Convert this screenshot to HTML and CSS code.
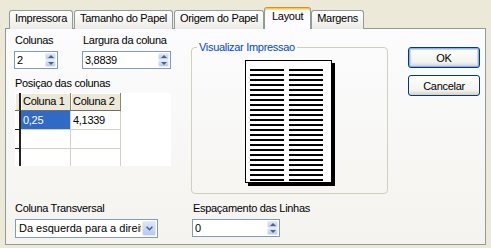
FILE: index.html
```html
<!DOCTYPE html>
<html lang="pt">
<head>
  <meta charset="UTF-8" />
  <title>Layout</title>
  <link rel="stylesheet" href="styles.css">
</head>
<body>
  <div class="dialog">
    <div class="tabs">
      <div class="tab">Impressora</div>
      <div class="tab">Tamanho do Papel</div>
      <div class="tab">Origem do Papel</div>
      <div class="tab active">Layout</div>
      <div class="tab">Margens</div>
    </div>

    <div class="panel">
      <div class="left">
        <div class="fields">
          <div class="field">
            <div class="label">Colunas</div>
            <div class="spin cols">
              <span class="value">2</span>
              <span class="spin-btns"><span class="up"></span><span class="down"></span></span>
            </div>
          </div>
          <div class="field">
            <div class="label">Largura da coluna</div>
            <div class="spin width">
              <span class="value">3,8839</span>
              <span class="spin-btns"><span class="up"></span><span class="down"></span></span>
            </div>
          </div>
        </div>
        <div class="label section-label">Posiçao das colunas</div>
        <div class="grid">
          <table>
            <tr><th class="ind"></th><th>Coluna 1</th><th>Coluna 2</th></tr>
            <tr><td class="ind"></td><td class="sel">0,25</td><td>4,1339</td></tr>
            <tr><td class="ind"></td><td></td><td></td></tr>
            <tr><td class="ind"></td><td></td><td></td></tr>
          </table>
        </div>
      </div>

      <fieldset class="preview">
        <legend>Visualizar Impressao</legend>
        <div class="page">
          <div class="page-col"></div>
          <div class="page-col"></div>
        </div>
      </fieldset>

      <div class="buttons">
        <button class="btn default">OK</button>
        <button class="btn">Cancelar</button>
      </div>

      <div class="bottom">
        <div class="label">Coluna Transversal</div>
        <div class="combo">
          <span class="value">Da esquerda para a direita</span>
          <span class="combo-btn">
            <svg width="7" height="5" viewBox="0 0 7 5"><path d="M0.6 0.8 L3.5 3.7 L6.4 0.8" fill="none" stroke="#4D6185" stroke-width="1.6"/></svg>
          </span>
        </div>
      </div>

      <div class="bottom second">
        <div class="label">Espaçamento das Linhas</div>
        <div class="spin spacing">
          <span class="value">0</span>
          <span class="spin-btns"><span class="up"></span><span class="down"></span></span>
        </div>
      </div>
    </div>
  </div>
</body>
</html>
```

FILE: styles.css
```css
* {
  box-sizing: border-box;
}
body {
  margin: 0;
  background: #ECE9D8;
  font-family: "Liberation Sans", Arial, sans-serif;
  font-size: 11px;
  letter-spacing: -0.3px;
  color: #000;
}
.dialog {
  padding: 7px 0 0 5px;
}

/* tabs */
.tabs {
  display: flex;
  align-items: flex-end;
  height: 22px;
  padding-left: 4px;
  margin-bottom: -1px;
}
.tab {
  height: 19px;
  padding: 1px 5px 0;
  line-height: 13px;
  white-space: nowrap;
  border: 1px solid #919B9C;
  border-bottom: 0;
  border-radius: 3px 3px 0 0;
  background: linear-gradient(#FFFFFF, #ECEBE6);
  margin-right: 1px;
}
.tab.active {
  position: relative;
  z-index: 1;
  height: 22px;
  padding: 2px 7px 0;
  margin-left: -1px;
  margin-right: 0;
  background: #FCFCFE;
  border-top-color: #E68B2C;
  box-shadow: inset 0 1px 0 #FFC83C, inset 0 2px 0 #FFE2A0;
}

/* panel */
.panel {
  width: 481px;
  height: 217px;
  border: 1px solid #919B9C;
  background: linear-gradient(#FCFCFE, #F4F3EE);
  padding: 5px 4px 0 8px;
  display: grid;
  grid-template-columns: 157px 197px 72px;
  grid-template-rows: 160px auto;
  column-gap: 20px;
  row-gap: 8px;
}
.label {
  line-height: 13px;
  padding-left: 1px;
  white-space: nowrap;
}
.fields {
  display: flex;
  gap: 24px;
}
.field .label,
.bottom .label {
  margin-bottom: 4px;
}

/* spin edit */
.spin {
  display: flex;
  height: 18px;
  border: 1px solid #7F9DB9;
  background: #fff;
}
.spin .value {
  flex: 1;
  padding-left: 2px;
  line-height: 16px;
}
.spin-btns {
  display: flex;
  flex-direction: column;
  width: 11px;
  margin: 1px;
}
.spin-btns span {
  flex: 1;
  display: flex;
  align-items: center;
  justify-content: center;
  background: linear-gradient(#DCE5FC, #B6C9F5);
  border: 1px solid #E4EBFD;
  border-radius: 2px;
}
.spin-btns .up::after {
  content: "";
  border: 3px solid transparent;
  border-top: 0;
  border-bottom-color: #4D6185;
}
.spin-btns .down::after {
  content: "";
  border: 3px solid transparent;
  border-bottom: 0;
  border-top-color: #4D6185;
}
.cols { width: 44px; }
.width { width: 89px; }
.spacing { width: 88px; }

/* grid */
.section-label {
  margin-top: 8px;
  margin-bottom: 3px;
}
.grid {
  margin-left: 1px;
  width: 156px;
  height: 73px;
  background: #fff;
  overflow: hidden;
}
.grid table {
  border-collapse: separate;
  border-spacing: 0;
  table-layout: fixed;
  width: 106px;
}
.grid th,
.grid td {
  padding: 0 0 0 2px;
  text-align: left;
  font-weight: normal;
  white-space: nowrap;
  overflow: hidden;
}
.grid th {
  width: 50px;
  height: 18px;
  line-height: 17px;
  background: #ECE9D8;
  border-right: 1px solid #8A8775;
  border-bottom: 1px solid #716F64;
  box-shadow: inset 1px 1px 0 #fff;
}
.grid td {
  height: 19px;
  line-height: 18px;
  border-right: 1px solid #D4D0C8;
  border-bottom: 1px solid #D4D0C8;
}
.grid .ind {
  width: 6px;
  padding: 0;
  border-right: 2px solid #222;
}
.grid td.ind {
  border-bottom-color: #222;
}
.grid .sel {
  background: #316AC5;
  color: #fff;
}

/* preview */
.preview {
  margin: 7px 0 0;
  padding: 0;
  height: 153px;
  min-width: 0;
  align-self: start;
  border: 1px solid #D0D0BF;
  border-radius: 4px;
}
.preview legend {
  margin-left: 5px;
  padding: 0 2px;
  line-height: 13px;
  color: #0046D5;
}
.page {
  margin: 6px 0 0 53px;
  width: 87px;
  height: 123px;
  border: 1px solid #000;
  background: #fff;
  box-shadow: 3px 3px 0 #000;
  display: flex;
  gap: 5px;
  padding: 8px 0 0 4px;
}
.page-col {
  width: 34px;
  height: 112px;
  background: repeating-linear-gradient(#000 0 2px, transparent 2px 5px);
}

/* buttons */
.buttons {
  display: flex;
  flex-direction: column;
  gap: 7px;
  padding-top: 13px;
}
.btn {
  height: 21px;
  padding: 0;
  font: inherit;
  letter-spacing: inherit;
  color: #000;
  border: 1px solid #003C74;
  border-radius: 3px;
  background: linear-gradient(#FFFFFF, #F3F3EF 75%, #D6D0C5);
}
.btn.default {
  box-shadow: inset 0 0 0 1px #8FAEEB, inset 0 0 0 2px #C4D5F7;
}

/* combo */
.combo {
  display: flex;
  width: 143px;
  height: 19px;
  margin-left: 1px;
  border: 1px solid #7F9DB9;
  background: #fff;
}
.combo .value {
  flex: 1;
  padding-left: 3px;
  line-height: 17px;
  letter-spacing: 0;
  overflow: hidden;
  white-space: nowrap;
}
.combo-btn {
  flex: none;
  width: 14px;
  margin: 1px;
  display: flex;
  align-items: center;
  justify-content: center;
  background: linear-gradient(#DCE5FC, #B6C9F5);
  border: 1px solid #E4EBFD;
  border-radius: 2px;
}
.second {
  padding-left: 1px;
}
```
